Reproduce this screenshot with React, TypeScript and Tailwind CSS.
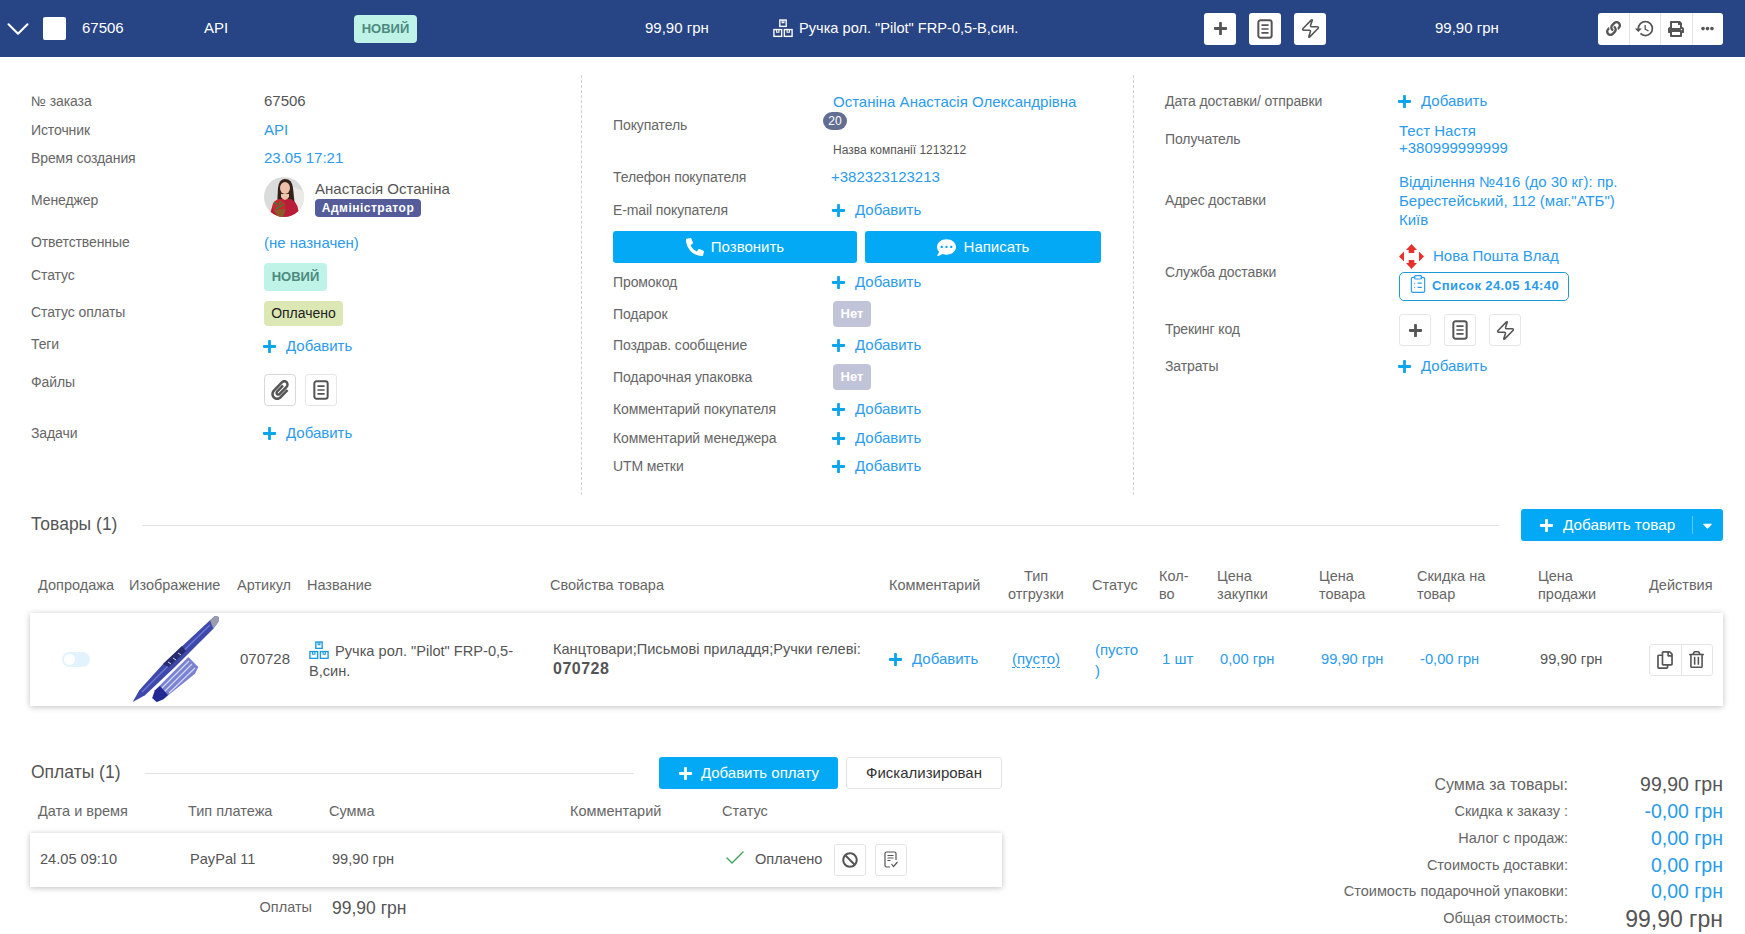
import React from "react";
import { FaPlus, FaLink, FaPrint, FaEllipsisH, FaPhone, FaCommentDots, FaPaperclip, FaBan, FaCaretDown, FaRegCopy, FaRegTrashAlt } from "react-icons/fa";
import { MdHistory } from "react-icons/md";
import { ChevronDown, Zap, Check, ClipboardList } from "lucide-react";

const ListDoc = ({ s = 20 }: { s?: number }) => (
  <svg width={s} height={s} viewBox="0 0 18 18" fill="none" stroke="#555" strokeWidth="1.8">
    <rect x="3" y="1.2" width="12" height="15.6" rx="2" />
    <path d="M5.8 5.5h6.4M5.8 9h6.4M5.8 12.5h6.4" strokeWidth="1.5" />
  </svg>
);

const Boxes = ({ color, s = 20 }: { color: string; s?: number }) => (
  <svg width={s} height={s * 0.92} viewBox="0 0 22 20" fill="none" stroke={color} strokeWidth="1.5">
    <rect x="7.5" y="1" width="7" height="7" />
    <rect x="1" y="11.5" width="8.5" height="7.5" />
    <rect x="12.5" y="11.5" width="8.5" height="7.5" />
    <path d="M10 1v3h2V1M4 11.5v3h2.5v-3M15.5 11.5v3H18v-3" strokeWidth="1.2" />
  </svg>
);

const Add = () => (
  <span className="-ml-[2px] mt-[1px] flex items-center gap-[9px] text-[15px] text-[#2a9bed]">
    <FaPlus className="text-[15px] text-[#0ba5ec]" />
    Добавить
  </span>
);

const Square = ({ children, top }: { children: React.ReactNode; top?: boolean }) => (
  <span className={`flex h-8 w-8 items-center justify-center rounded-[3px] bg-white ${top ? "" : "border border-[#e6e6e6]"}`}>{children}</span>
);

const TrioIcons = ({ top }: { top?: boolean }) => (
  <>
    <Square top={top}><FaPlus className="text-[15px] text-[#555]" /></Square>
    <Square top={top}><ListDoc /></Square>
    <Square top={top}><Zap size={21} strokeWidth={1.8} color="#555" /></Square>
  </>
);

const Label = ({ children, c = "" }: { children: React.ReactNode; c?: string }) => (
  <span className={`text-[14px] tracking-[-0.1px] text-[#666] ${c}`}>{children}</span>
);

const Avatar = () => (
  <svg width="40" height="40" viewBox="0 0 40 40" className="rounded-full">
    <rect width="40" height="40" fill="#d9dcdb" />
    <path d="M29 10 L40 14 V40 H30Z" fill="#eceae6" />
    <path d="M13 30 L14 11 Q15 2 21 2 Q28 2 29 11 L31 30Z" fill="#35201a" />
    <ellipse cx="21" cy="11" rx="5" ry="6" fill="#eec1aa" />
    <path d="M6 40 Q7 26 15 22 L27 22 Q35 26 35 40Z" fill="#b81e38" />
    <path d="M17 20 Q21 26 25 20 L25 17 L17 17Z" fill="#eec1aa" />
    <circle cx="15" cy="29" r="6.5" fill="#c72a2e" />
    <path d="M10 25l3 3M17 24l-2 4M12 32l5-3M20 27l-3 2" stroke="#3d7a3d" strokeWidth="1.5" />
    <path d="M10 33l4 7h5l3-8z" fill="#8c5a2a" />
  </svg>
);

const Pen = () => (
  <svg width="87" height="87" viewBox="0 0 87 87">
    <path d="M0.7 86 L7.3 74.3 L31.3 47.7 L78 4.3 L83 0 L87 1 L86.3 6 L81.3 12.7 L43 51 L13 79.3Z" fill="#3f49ab" />
    <path d="M78 4.3 L83 0 L87 1 L86.3 6 L81.3 12.7Z" fill="#9a9cb0" />
    <path d="M10 76 L40 46 L78 9" stroke="#6d77d4" strokeWidth="1.4" fill="none" />
    <path d="M31 48 L50 30 L54 35 L37 51Z" fill="#262c6e" />
    <path d="M36 46l3 2M41 42l3 2M46 37l3 2" stroke="#d8dbf0" strokeWidth="1" />
    <path d="M20.3 82 L23 74.3 L56.3 41 L66.3 51 L63 57.7 L31.3 83.3 L24.7 86Z" fill="#7a82d2" />
    <path d="M28 74 L57 45 M32 76 L60 48 M37 77 L63 52" stroke="#d6d9f5" strokeWidth="1.2" />
    <path d="M20.3 82 L23 74.3 L28 70 L36 79 L31.3 83.3 L24.7 86Z" fill="#232a94" />
  </svg>
);

const Nova = () => (
  <svg width="25" height="25" viewBox="0 0 25 25" fill="#e8302c">
    <path d="M12.5 0 L18 6 H15.3 V9 H9.7 V6 H7Z" />
    <path d="M12.5 25 L18 19 H15.3 V16 H9.7 V19 H7Z" />
    <path d="M0 12.5 L5 7.5 V17.5Z" />
    <path d="M25 12.5 L20 7.5 V17.5Z" />
  </svg>
);

const ReceiptCheck = () => (
  <svg width="18" height="18" viewBox="0 0 18 18" fill="none" stroke="#555" strokeWidth="1.2">
    <path d="M8 16H4.5A1.5 1.5 0 0 1 3 14.5v-12A1.5 1.5 0 0 1 4.5 1h8A1.5 1.5 0 0 1 14 2.5V9" />
    <path d="M5.5 4.5h6M5.5 7h6M5.5 9.5h3" />
    <path d="M9.5 13l2 2.5 4-4.5" />
  </svg>
);

const headers: { t: React.ReactNode; c: string }[] = [
  { t: "Допродажа", c: "!pl-[8px]" },
  { t: "Изображение", c: "!pl-[6px]" },
  { t: "Артикул", c: "" },
  { t: "Название", c: "" },
  { t: "Свойства товара", c: "" },
  { t: "Комментарий", c: "" },
  { t: <>Тип<br />отгрузки</>, c: "text-center !pl-0" },
  { t: "Статус", c: "!pl-[10px]" },
  { t: <>Кол-<br />во</>, c: "" },
  { t: <>Цена<br />закупки</>, c: "" },
  { t: <>Цена<br />товара</>, c: "" },
  { t: <>Скидка на<br />товар</>, c: "" },
  { t: <>Цена<br />продажи</>, c: "" },
  { t: "Действия", c: "" },
];

const gridCols = "grid-cols-[93px_107px_70px_243px_339px_108px_92px_70px_58px_102px_98px_121px_111px_81px]";

const StatusBadge = () => (
  <span className="flex h-[28px] w-[63px] items-center justify-center rounded-[4px] bg-[#bff3e8] text-[13px] font-bold text-[#4d8a7e]">НОВИЙ</span>
);

export default function App() {
  return (
    <div className="h-[934px] w-[1745px] overflow-hidden bg-white font-['Liberation_Sans',Arial,sans-serif] text-[15px] text-[#555]">
      {/* top bar */}
      <div className="flex h-[57px] items-center bg-[#274484] pl-[9px] text-white">
        <span className="w-[34px]"><ChevronDown size={38} strokeWidth={1.3} className="-ml-[10px]" /></span>
        <span className="w-[39px]"><span className="block h-[23px] w-[23px] rounded-[2px] bg-white" /></span>
        <span className="w-[122px] text-[15px]">67506</span>
        <span className="w-[150px] text-[15px]">API</span>
        <span className="w-[291px]"><StatusBadge /></span>
        <span className="w-[128px] text-[15px]">99,90 грн</span>
        <span className="flex w-[431px] items-center gap-[6px] text-[14.6px]"><Boxes color="#fff" />Ручка рол. "Pilot" FRP-0,5-В,син.</span>
        <span className="flex w-[231px] gap-[13px]"><TrioIcons top /></span>
        <span className="w-[163px] text-[15px]">99,90 грн</span>
        <span className="flex h-8 w-[125px] overflow-hidden rounded-[3px] bg-white text-[#555]">
          <span className="flex flex-1 items-center justify-center border-r border-[#e4e4e4]"><FaLink className="text-[15px]" /></span>
          <span className="flex flex-1 items-center justify-center border-r border-[#e4e4e4]"><MdHistory className="text-[21px]" /></span>
          <span className="flex flex-1 items-center justify-center border-r border-[#e4e4e4]"><FaPrint className="text-[16px]" /></span>
          <span className="flex flex-1 items-center justify-center"><FaEllipsisH className="text-[13px]" /></span>
        </span>
      </div>

      {/* info columns */}
      <div className="mt-[18px] flex h-[420px]">
        {/* left */}
        <div className="w-[581px] pl-[31px] pt-[12px]">
          {[
            { h: "h-[28px]", l: "№ заказа", v: <span className="mt-[1px]">67506</span> },
            { h: "h-[30px]", l: "Источник", v: <span className="mt-[1px] text-[#2a9bed]">API</span> },
            { h: "h-[26px]", l: "Время создания", v: <span className="text-[#2a9bed]">23.05 17:21</span> },
            {
              h: "h-[52px]", l: "Менеджер", lc: "mt-[6px]",
              v: (
                <span className="flex items-center gap-[11px]">
                  <Avatar />
                  <span className="flex flex-col pt-[1px]">
                    <span className="text-[15px] leading-[21px]">Анастасія Останіна</span>
                    <span className="flex h-[18px] w-[106px] items-center justify-center rounded-[4px] bg-[#545d99] text-[12px] font-bold tracking-[0.5px] text-white">Адміністратор</span>
                  </span>
                </span>
              ),
            },
            { h: "h-[40px]", l: "Ответственные", lc: "mb-[2px]", v: <span className="text-[#2a9bed]">(не назначен)</span> },
            { h: "h-[28px]", l: "Статус", lc: "mb-[4px]", v: <StatusBadge /> },
            {
              h: "h-[44px]", l: "Статус оплаты", lc: "mb-[2px]",
              v: <span className="flex h-[25px] w-[79px] items-center justify-center rounded-[4px] bg-[#dce8b4] text-[14px] text-[#222]">Оплачено</span>,
            },
            { h: "h-[22px]", l: "Теги", lc: "mb-[4px]", v: <Add /> },
            {
              h: "h-[66px]", l: "Файлы", lc: "mb-[16px]",
              v: (
                <span className="flex gap-[9px]">
                  <span className="flex h-8 w-8 items-center justify-center rounded-[4px] border border-[#d8d8d8]"><FaPaperclip className="text-[20px] text-[#555]" /></span>
                  <Square><ListDoc /></Square>
                </span>
              ),
            },
            { h: "h-[20px]", l: "Задачи", v: <Add /> },
          ].map((r) => (
            <div key={r.l} className={`flex items-center ${r.h}`}>
              <span className="w-[233px]"><Label c={`block ${(r as { lc?: string }).lc ?? ""}`}>{r.l}</Label></span>
              {r.v}
            </div>
          ))}
        </div>

        {/* center */}
        <div className="w-[552px] border-l border-dashed border-[#cfcfcf] pl-[31px] pt-[12px]">
          <div className="flex h-[76px] items-center">
            <span className="w-[220px]"><Label>Покупатель</Label></span>
            <span className="flex h-[76px] flex-col pt-[5px]">
              <span className="leading-[20px] text-[#2a9bed]">Останіна Анастасія Олександрівна</span>
              <span className="-ml-[10px] flex h-[18px] w-[24px] items-center justify-center rounded-full bg-[#636e93] text-[12px] text-white">20</span>
              <span className="mt-[11px] text-[12px] leading-[18px] text-[#555]">Назва компанії 1213212</span>
            </span>
          </div>
          <div className="flex h-[28px] items-center">
            <span className="w-[218px]"><Label>Телефон покупателя</Label></span>
            <span className="text-[#2a9bed]">+382323123213</span>
          </div>
          <div className="flex h-[38px] items-center">
            <span className="w-[220px]"><Label>E-mail покупателя</Label></span>
            <Add />
          </div>
          <div className="mt-[2px] flex h-8 gap-[8px]">
            <span className="flex w-[244px] items-center justify-center gap-[7px] rounded-[3px] bg-[#03a9f4] text-white"><FaPhone className="scale-x-[-1] text-[18px]" />Позвонить</span>
            <span className="flex w-[236px] items-center justify-center gap-[8px] rounded-[3px] bg-[#03a9f4] text-white"><FaCommentDots className="text-[19px]" />Написать</span>
          </div>
          {[
            { h: "h-[38px]", l: "Промокод", v: <Add /> },
            { h: "h-[26px]", l: "Подарок", v: <span className="flex h-[26px] w-[38px] items-center justify-center rounded-[4px] bg-[#c1c3d8] text-[13px] font-bold text-white">Нет</span> },
            { h: "h-[36px]", l: "Поздрав. сообщение", v: <Add /> },
            { h: "h-[28px]", l: "Подарочная упаковка", v: <span className="flex h-[26px] w-[38px] items-center justify-center rounded-[4px] bg-[#c1c3d8] text-[13px] font-bold text-white">Нет</span> },
            { h: "h-[36px]", l: "Комментарий покупателя", v: <Add /> },
            { h: "h-[22px]", l: "Комментарий менеджера", v: <Add /> },
            { h: "h-[34px]", l: "UTM метки", v: <Add /> },
          ].map((r) => (
            <div key={r.l} className={`flex items-center ${r.h}`}>
              <span className="w-[220px]"><Label>{r.l}</Label></span>
              {r.v}
            </div>
          ))}
        </div>

        {/* right */}
        <div className="flex-1 border-l border-dashed border-[#cfcfcf] pl-[31px] pt-[12px]">
          {[
            { h: "h-[28px]", l: "Дата доставки/ отправки", v: <Add /> },
            {
              h: "h-[48px]", l: "Получатель",
              v: <span className="leading-[17px] text-[#2a9bed]">Тест Настя<br />+380999999999</span>,
            },
            {
              h: "h-[74px]", l: "Адрес доставки",
              v: <span className="leading-[19px] text-[#2a9bed]">Відділення №416 (до 30 кг): пр.<br />Берестейський, 112 (маг."АТБ")<br />Київ</span>,
            },
            {
              h: "h-[70px]", l: "Служба доставки",
              v: (
                <span className="flex flex-col">
                  <span className="flex items-center gap-[9px] text-[#2a9bed]"><Nova />Нова Пошта Влад</span>
                  <span className="mt-[3px] flex h-[29px] w-[170px] items-center gap-[4px] rounded-[5px] border border-[#1d9bd8] pl-[8px] text-[13px] font-bold tracking-[0.4px] text-[#2a9bed]">
                    <ClipboardList size={20} strokeWidth={1.4} className="-mt-[4px]" />Список 24.05 14:40
                  </span>
                </span>
              ),
            },
            { h: "h-[46px]", l: "Трекинг код", lc: "mb-[2px]", v: <span className="flex gap-[13px]"><TrioIcons /></span> },
            { h: "h-[26px]", l: "Затраты", v: <Add /> },
          ].map((r) => (
            <div key={r.l} className={`flex items-center ${r.h}`}>
              <span className="w-[234px]"><Label c={`block ${(r as { lc?: string }).lc ?? ""}`}>{r.l}</Label></span>
              {r.v}
            </div>
          ))}
        </div>
      </div>

      {/* products */}
      <div className="mt-[14px] pl-[30px] pr-[22px]">
        <div className="flex h-8 items-center">
          <span className="mb-[2px] ml-[1px] w-[111px] whitespace-nowrap text-[17.5px] text-[#555]">Товары (1)</span>
          <span className="h-px flex-1 bg-[#e2e2e2]" />
          <span className="ml-[22px] flex h-8 w-[202px] items-center rounded-[3px] bg-[#03a9f4] pl-[18px] text-white">
            <FaPlus className="text-[15px]" />
            <span className="ml-[9px] text-[15.3px]">Добавить товар</span>
            <span className="ml-[17px] h-[18px] w-px bg-[#5cc9f8]" />
            <FaCaretDown className="ml-[7px] text-[15px]" />
          </span>
        </div>

        <div className={`mt-4 grid h-[56px] items-center text-[14.5px] leading-[18px] text-[#666] ${gridCols}`}>
          {headers.map((h, i) => (
            <div key={i} className={`whitespace-nowrap pl-[7px] ${h.c}`}>{h.t}</div>
          ))}
        </div>

        <div className={`grid h-[93px] items-center bg-white shadow-[0_1px_6px_rgba(0,0,0,0.25)] ${gridCols}`}>
          <div className="pl-[32px]">
            <span className="flex h-[15px] w-[28px] items-center rounded-full bg-[#e3f3fd] pl-[2px]"><span className="h-[11px] w-[11px] rounded-full bg-white" /></span>
          </div>
          <div className="pl-[9px]"><Pen /></div>
          <div className="pl-[10px]">070728</div>
          <div className="pl-[9px] pr-[8px] text-[14.6px] leading-[20px]">
            <span className="mr-[6px] inline-block translate-y-[3px]"><Boxes color="#1a9ae0" /></span>Ручка рол. "Pilot" FRP-0,5-В,син.
          </div>
          <div className="whitespace-nowrap pl-[10px] text-[14.6px] leading-[19px]">
            Канцтовари;Письмові приладдя;Ручки гелеві:<br /><b className="text-[16px] tracking-[0.5px]">070728</b>
          </div>
          <div className="pb-[1px] pl-[8px]"><Add /></div>
          <div className="text-center"><span className="border-b border-dashed border-[#2a9bed] text-[#2a9bed]">(пусто)</span></div>
          <div className="pl-[13px] leading-[21px] text-[#2a9bed]">(пусто<br />)</div>
          <div className="pl-[10px] text-[#2a9bed]">1 шт</div>
          <div className="pl-[10px] text-[14.7px] text-[#2a9bed]">0,00 грн</div>
          <div className="pl-[9px] text-[14.7px] text-[#2a9bed]">99,90 грн</div>
          <div className="pl-[10px] text-[14.7px] text-[#2a9bed]">-0,00 грн</div>
          <div className="pl-[9px] text-[14.7px]">99,90 грн</div>
          <div className="pl-[7px]">
            <span className="flex h-8 w-[64px] overflow-hidden rounded-[3px] border border-[#e4e4e4]">
              <span className="flex flex-1 items-center justify-center border-r border-[#e4e4e4]"><FaRegCopy className="text-[18px]" /></span>
              <span className="flex flex-1 items-center justify-center"><FaRegTrashAlt className="text-[17px]" /></span>
            </span>
          </div>
        </div>

        {/* bottom */}
        <div className="mt-[51px] flex">
          <div className="w-[972px]">
            <div className="flex h-8 items-center">
              <span className="mb-[2px] ml-[1px] w-[114px] whitespace-nowrap text-[17.5px]">Оплаты (1)</span>
              <span className="h-px w-[489px] bg-[#e2e2e2]" />
              <span className="ml-[25px] flex h-8 w-[179px] items-center justify-center gap-[8px] rounded-[3px] bg-[#03a9f4] text-white"><FaPlus className="text-[15px]" />Добавить оплату</span>
              <span className="ml-[8px] flex h-8 w-[156px] items-center justify-center rounded-[3px] border border-[#e4e4e4] text-[#333]">Фискализирован</span>
            </div>
            <div className="flex h-[44px] items-center pt-[2px] text-[14.5px] text-[#666]">
              <span className="w-[158px] pl-[8px]">Дата и время</span>
              <span className="w-[141px]">Тип платежа</span>
              <span className="w-[241px]">Сумма</span>
              <span className="w-[152px]">Комментарий</span>
              <span>Статус</span>
            </div>
            <div className="flex h-[54px] items-center bg-white text-[14.6px] shadow-[0_1px_6px_rgba(0,0,0,0.25)]">
              <span className="w-[160px] pl-[10px]">24.05 09:10</span>
              <span className="w-[142px]">PayPal 11</span>
              <span className="w-[391px]">99,90 грн</span>
              <Check size={24} strokeWidth={1.4} color="#3aa655" className="-mt-[4px]" />
              <span className="ml-[8px] w-[79px]">Оплачено</span>
              <span className="flex h-8 w-8 items-center justify-center rounded-[3px] border border-[#e4e4e4]"><FaBan className="text-[16px]" /></span>
              <span className="ml-[9px] flex h-8 w-8 items-center justify-center rounded-[3px] border border-[#e4e4e4]"><ReceiptCheck /></span>
            </div>
            <div className="mt-[10px] flex h-[22px] items-center">
              <span className="w-[282px] text-right text-[14.5px] text-[#666]">Оплаты</span>
              <span className="ml-[20px] text-[17.5px]">99,90 грн</span>
            </div>
          </div>
          <div className="flex-1 pt-[15px] text-[14.5px] text-[#666]">
            {[
              { h: "h-[26px]", l: "Сумма за товары:", lc: "text-[16px]", v: "99,90 грн", c: "text-[#555]", s: "text-[19.5px]" },
              { h: "h-[28px]", l: "Скидка к заказу :", lc: "", v: "-0,00 грн", c: "text-[#2a9bed]", s: "text-[19.5px]" },
              { h: "h-[26px]", l: "Налог с продаж:", lc: "", v: "0,00 грн", c: "text-[#2a9bed]", s: "text-[19.5px]" },
              { h: "h-[28px]", l: "Стоимость доставки:", lc: "", v: "0,00 грн", c: "text-[#2a9bed]", s: "text-[19.5px]" },
              { h: "h-[24px]", l: "Стоимость подарочной упаковки:", lc: "", v: "0,00 грн", c: "text-[#2a9bed]", s: "text-[19.5px]" },
              { h: "h-[30px]", l: "Общая стоимость:", lc: "", v: "99,90 грн", c: "text-[#555]", s: "text-[23px]" },
            ].map((r) => (
              <div key={r.l} className={`flex items-center justify-end whitespace-nowrap ${r.h}`}>
                <span className={r.lc}>{r.l}</span>
                <span className={`w-[155px] text-right ${r.s} ${r.c}`}>{r.v}</span>
              </div>
            ))}
          </div>
        </div>
      </div>
    </div>
  );
}
